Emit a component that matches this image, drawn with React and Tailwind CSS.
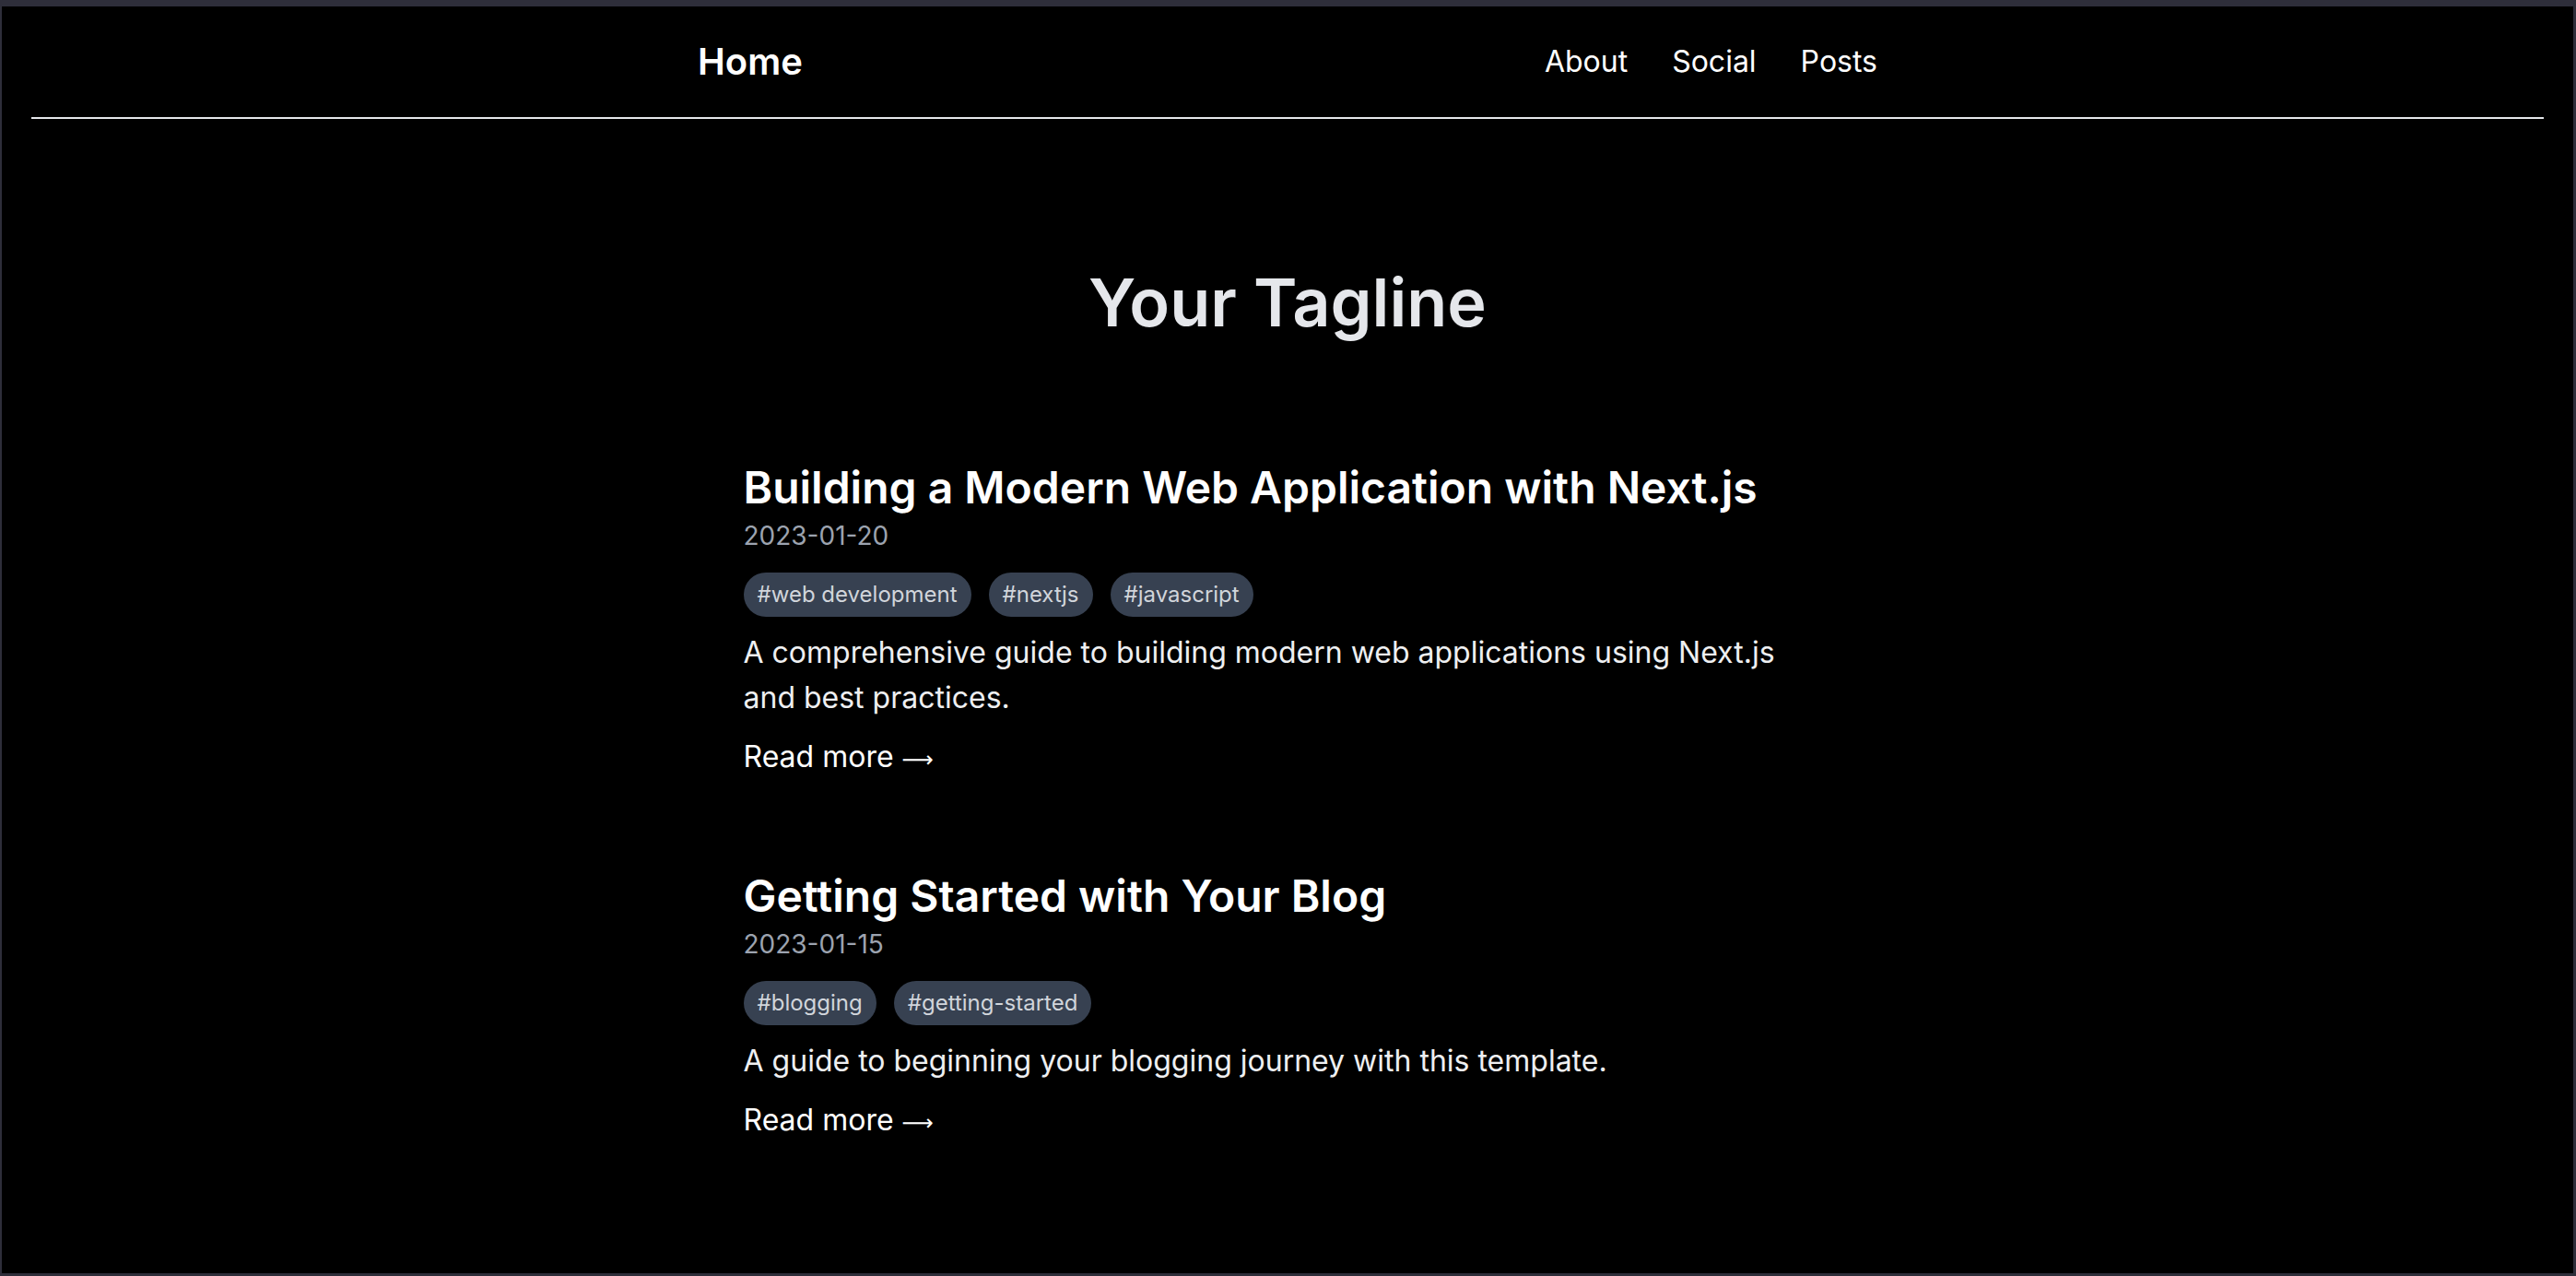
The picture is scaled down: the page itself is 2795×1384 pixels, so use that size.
import React from "react";

const posts = [
  {
    title: "Building a Modern Web Application with Next.js",
    date: "2023-01-20",
    tags: ["web development", "nextjs", "javascript"],
    desc: "A comprehensive guide to building modern web applications using Next.js and best practices.",
  },
  {
    title: "Getting Started with Your Blog",
    date: "2023-01-15",
    tags: ["blogging", "getting-started"],
    desc: "A guide to beginning your blogging journey with this template.",
  },
];

export default function App() {
  return (
    <div
      className="h-screen w-full bg-[#2e2e3a] pt-[7px] pl-[2px] pr-[3px] pb-[3px] flex flex-col"
      style={{ fontFamily: "Inter, 'Noto Sans', sans-serif" }}
    >
      <div className="flex-1 bg-black flex flex-col overflow-hidden">
        <header className="mx-8 h-[122px] border-b-2 border-[#e5e7eb] flex items-center">
          <div className="w-[1280px] mx-auto flex items-center justify-between">
            <a className="text-[40px] font-semibold text-white leading-none">Home</a>
            <nav className="flex items-center gap-[48px] text-[32px] text-white leading-none">
              <a>About</a>
              <a>Social</a>
              <a>Posts</a>
            </nav>
          </div>
        </header>
        <main className="w-[1181px] mx-auto">
          <h1 className="mt-[159px] text-center text-[72px] leading-[80px] font-semibold text-[#e5e7eb]">
            Your Tagline
          </h1>
          <div className="mt-[133px] flex flex-col gap-[99px]">
            {posts.map((p) => (
              <article key={p.title} className="flex flex-col">
                <h2 className="text-[48px] leading-[56px] font-semibold text-white">{p.title}</h2>
                <div className="mt-[4px] text-[28px] leading-[40px] text-[#9ca3af]">{p.date}</div>
                <div className="mt-[20px] flex gap-[19px]">
                  {p.tags.map((t) => (
                    <span
                      key={t}
                      className="h-[48px] px-[15px] rounded-full bg-[#374151] text-[#d1d5db] text-[24px] leading-[48px]"
                    >
                      #{t}
                    </span>
                  ))}
                </div>
                <p className="mt-[14px] max-w-[1150px] text-[32px] leading-[49px] text-[#eeeff1]">{p.desc}</p>
                <a className="mt-[15px] h-[49px] text-[32px] leading-[49px] text-white">
                  Read more{" "}
                  <span style={{ fontFamily: "'DejaVu Sans', sans-serif" }} className="text-[24px] leading-none">
                    ⟶
                  </span>
                </a>
              </article>
            ))}
          </div>
        </main>
      </div>
    </div>
  );
}
